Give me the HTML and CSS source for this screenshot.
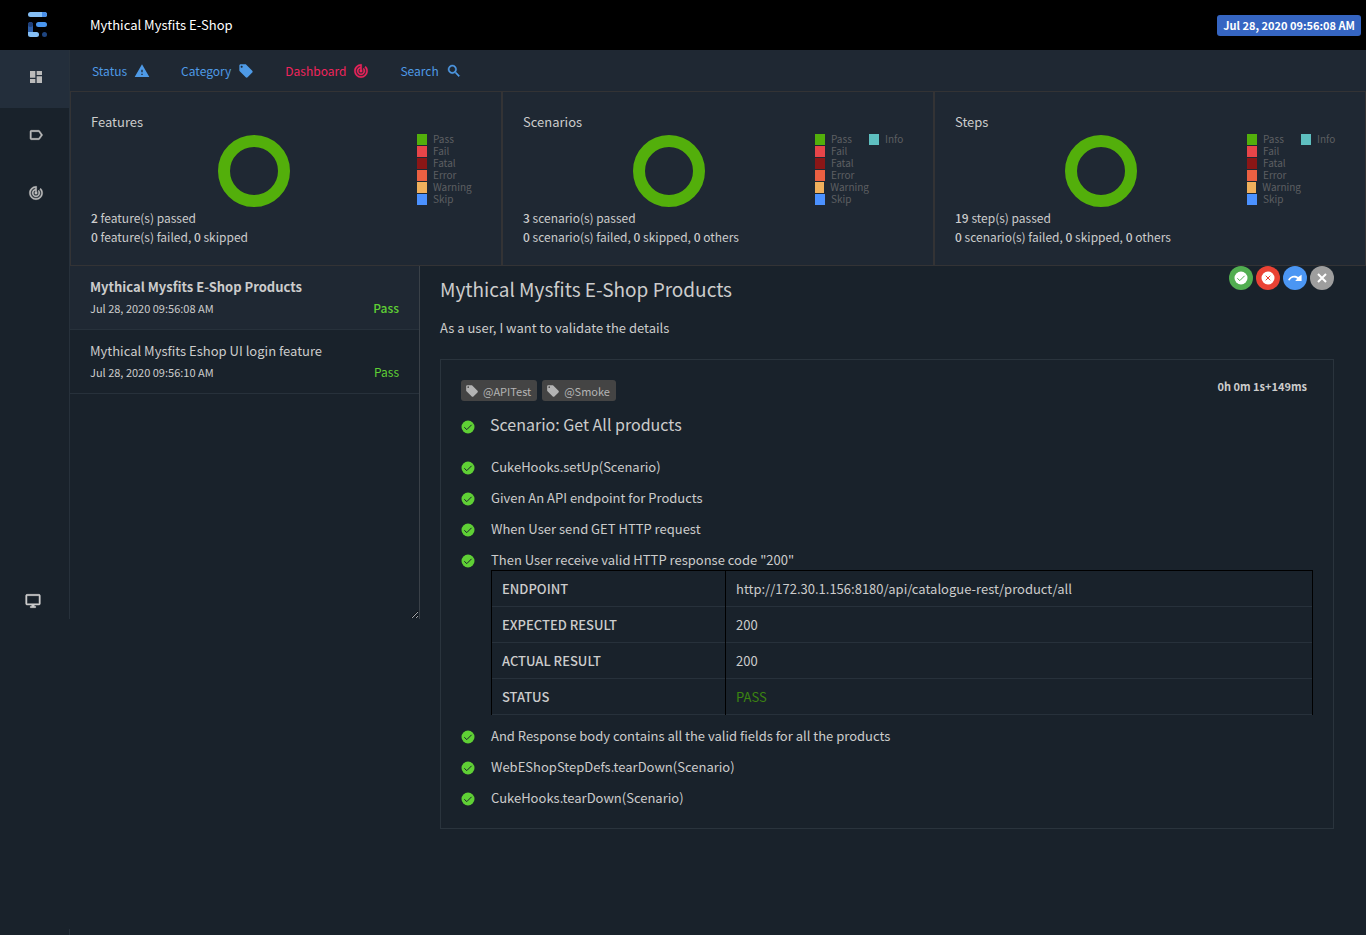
FILE: index.html
```html
<!DOCTYPE html>
<html lang="en">
<head>
<meta charset="utf-8">
<title>Mythical Mysfits E-Shop</title>
<link rel="stylesheet" href="styles.css">
</head>
<body>
<svg class="defs" aria-hidden="true">
  <symbol id="dash" viewBox="0 0 24 24"><path d="M3 13h8V3H3v10zm0 8h8v-6H3v6zm10 0h8V11h-8v10zm0-18v6h8V3h-8z"/></symbol>
  <symbol id="label" viewBox="0 0 24 24"><path d="M17.63 5.84C17.27 5.33 16.67 5 16 5L5 5.01C3.9 5.01 3 5.9 3 7v10c0 1.1.9 1.99 2 1.99L16 19c.67 0 1.27-.33 1.63-.84L22 12l-4.37-6.16zM16 17H5V7h11l3.55 5L16 17z" stroke="currentColor" stroke-width=".7"/></symbol>
  <symbol id="track" viewBox="0 0 24 24"><path d="M19.07 4.93l-1.41 1.41C19.1 7.79 20 9.79 20 12c0 4.42-3.58 8-8 8s-8-3.58-8-8c0-4.08 3.05-7.44 7-7.93v2.02C8.16 6.57 6 9.03 6 12c0 3.31 2.69 6 6 6s6-2.69 6-6c0-1.66-.67-3.16-1.76-4.24l-1.41 1.41C15.55 9.9 16 10.9 16 12c0 2.21-1.79 4-4 4s-4-1.79-4-4c0-1.86 1.28-3.41 3-3.86v2.14c-.6.35-1 .98-1 1.72 0 1.1.9 2 2 2s2-.9 2-2c0-.74-.4-1.38-1-1.72V2h-1C6.48 2 2 6.48 2 12s4.48 10 10 10 10-4.48 10-10c0-2.76-1.12-5.26-2.93-7.07z" stroke="currentColor" stroke-width=".6"/></symbol>
  <symbol id="desktop" viewBox="0 0 24 24"><path d="M21 2H3c-1.1 0-2 .9-2 2v12c0 1.1.9 2 2 2h7v2H8v2h8v-2h-2v-2h7c1.1 0 2-.9 2-2V4c0-1.1-.9-2-2-2zm0 14H3V4h18v12z" stroke="currentColor" stroke-width=".7"/></symbol>
  <symbol id="warn" viewBox="0 0 24 24"><path d="M1 21h22L12 2 1 21zm12-3h-2v-2h2v2zm0-4h-2v-4h2v4z"/></symbol>
  <symbol id="tag" viewBox="0 0 24 24"><path d="M21.41 11.58l-9-9C12.05 2.22 11.55 2 11 2H4c-1.1 0-2 .9-2 2v7c0 .55.22 1.05.59 1.42l9 9c.36.36.86.58 1.41.58.55 0 1.05-.22 1.41-.59l7-7c.37-.36.59-.86.59-1.41 0-.55-.23-1.06-.59-1.42zM5.5 7C4.67 7 4 6.33 4 5.5S4.67 4 5.5 4 7 4.67 7 5.5 6.33 7 5.5 7z"/></symbol>
  <symbol id="search" viewBox="0 0 24 24"><path d="M15.5 14h-.79l-.28-.27C15.41 12.59 16 11.11 16 9.5 16 5.91 13.09 3 9.5 3S3 5.91 3 9.5 5.91 16 9.5 16c1.61 0 3.09-.59 4.23-1.57l.27.28v.79l5 4.99L20.49 19l-4.99-5zm-6 0C7.01 14 5 11.99 5 9.5S7.01 5 9.5 5 14 7.01 14 9.5 11.99 14 9.5 14z" stroke="currentColor" stroke-width=".6"/></symbol>
  <symbol id="check" viewBox="0 0 14 14"><circle cx="7" cy="7" r="6.5"/><path class="mark" d="M3.3 7.3 5.8 9.6 10.6 4.8"/></symbol>
  <symbol id="cross" viewBox="0 0 14 14"><circle cx="7" cy="7" r="6.5"/><path class="mark" d="M4.7 4.7l4.6 4.6M9.3 4.7 4.7 9.3"/></symbol>
  <symbol id="skip" viewBox="0 0 14 14"><path d="M0 9C1.6 5.2 6.5 3.2 10.2 6.1L13.6 3.8V10H7.2L9.2 7.7C6 5.4 3.2 6.4 1.6 9.6Z"/></symbol>
  <symbol id="close" viewBox="0 0 14 14"><path d="M3 3l8 8M11 3l-8 8" fill="none" stroke="currentColor" stroke-width="2"/></symbol>
</svg>

<header class="top">
  <a class="logo" href="#" aria-label="Home">
    <svg width="20" height="26" viewBox="0 0 20 26">
      <rect x="0" y="0" width="19" height="5" rx="2.5" fill="#85bff5"/><path d="M14 0h2.5a2.5 2.5 0 0 1 0 5H14z" fill="#4a8fe8"/>
      <rect x="8" y="10" width="11" height="5" rx="2.5" fill="#4a96ee"/>
      <rect x="0" y="10" width="5" height="14" rx="2.5" fill="#2b5ca6"/><rect x="0" y="10" width="5" height="5" rx="2.5" fill="#1f3f78"/>
      <path d="M0 20h8.5a2.5 2.5 0 0 1 0 5H2.5A2.5 2.5 0 0 1 0 22.5z" fill="#85bff5"/>
      <circle cx="16.5" cy="22.5" r="2.5" fill="#1f4580"/>
    </svg>
  </a>
  <span class="brand">Mythical Mysfits E-Shop</span>
  <span class="stamp">Jul 28, 2020 09:56:08 AM</span>
</header>

<div class="shell">
  <aside class="side">
    <a class="side-link current" href="#" aria-label="Features"><svg class="i16"><use href="#dash"/></svg></a>
    <a class="side-link" href="#" aria-label="Categories"><svg class="i16"><use href="#label"/></svg></a>
    <a class="side-link" href="#" aria-label="Dashboard"><svg class="i16"><use href="#track"/></svg></a>
    <button class="theme" aria-label="Theme"><svg class="i16"><use href="#desktop"/></svg></button>
  </aside>

  <div class="page">
    <nav class="bar">
      <a href="#">Status<svg class="i16"><use href="#warn"/></svg></a>
      <a href="#">Category<svg class="i16"><use href="#tag"/></svg></a>
      <a class="on" href="#">Dashboard<svg class="i16"><use href="#track"/></svg></a>
      <a href="#">Search<svg class="i16"><use href="#search"/></svg></a>
    </nav>

    <section class="cards">
      <article class="card">
        <h2>Features</h2>
        <div class="chart">
          <div class="plot"><svg width="72" height="72"><circle cx="36" cy="36" r="30" class="ring"/></svg></div>
          <ul class="legend">
            <li><i class="pass"></i>Pass</li><li><i class="fail"></i>Fail</li><li><i class="fatal"></i>Fatal</li><li><i class="error"></i>Error</li><li><i class="warning"></i>Warning</li><li><i class="skipped"></i>Skip</li>
          </ul>
        </div>
        <p><b>2</b> feature(s) passed</p>
        <p><b>0</b> feature(s) failed, <b>0</b> skipped</p>
      </article>
      <article class="card">
        <h2>Scenarios</h2>
        <div class="chart">
          <div class="plot"><svg width="72" height="72"><circle cx="36" cy="36" r="30" class="ring"/></svg></div>
          <ul class="legend wide">
            <li><i class="pass"></i>Pass</li><li><i class="fail"></i>Fail</li><li><i class="fatal"></i>Fatal</li><li><i class="error"></i>Error</li><li><i class="warning"></i>Warning</li><li><i class="skipped"></i>Skip</li><li><i class="info"></i>Info</li>
          </ul>
        </div>
        <p><b>3</b> scenario(s) passed</p>
        <p><b>0</b> scenario(s) failed, <b>0</b> skipped, <b>0</b> others</p>
      </article>
      <article class="card">
        <h2>Steps</h2>
        <div class="chart">
          <div class="plot"><svg width="72" height="72"><circle cx="36" cy="36" r="30" class="ring"/></svg></div>
          <ul class="legend wide">
            <li><i class="pass"></i>Pass</li><li><i class="fail"></i>Fail</li><li><i class="fatal"></i>Fatal</li><li><i class="error"></i>Error</li><li><i class="warning"></i>Warning</li><li><i class="skipped"></i>Skip</li><li><i class="info"></i>Info</li>
          </ul>
        </div>
        <p><b>19</b> step(s) passed</p>
        <p><b>0</b> scenario(s) failed, <b>0</b> skipped, <b>0</b> others</p>
      </article>
    </section>

    <main class="work">
      <ul class="tests">
        <li class="test active">
          <h3>Mythical Mysfits E-Shop Products</h3>
          <div class="meta"><span>Jul 28, 2020 09:56:08 AM</span><span class="ok">Pass</span></div>
        </li>
        <li class="test">
          <h3>Mythical Mysfits Eshop UI login feature</h3>
          <div class="meta"><span>Jul 28, 2020 09:56:10 AM</span><span class="ok">Pass</span></div>
        </li>
      </ul>

      <section class="detail">
        <div class="head">
          <h1>Mythical Mysfits E-Shop Products</h1>
          <div class="filters">
            <button class="round green" aria-label="Passed"><svg class="i14"><use href="#check"/></svg></button>
            <button class="round red" aria-label="Failed"><svg class="i14"><use href="#cross"/></svg></button>
            <button class="round blue" aria-label="Skipped"><svg class="i14"><use href="#skip"/></svg></button>
            <button class="round grey" aria-label="Clear filters"><svg class="i14"><use href="#close"/></svg></button>
          </div>
        </div>
        <p class="desc">As a user, I want to validate the details</p>

        <article class="scenario">
          <div class="tags">
            <span class="tag"><svg class="i14"><use href="#tag"/></svg>@APITest</span>
            <span class="tag"><svg class="i14"><use href="#tag"/></svg>@Smoke</span>
            <span class="time">0h 0m 1s+149ms</span>
          </div>
          <h2 class="title"><svg class="i14 st"><use href="#check"/></svg>Scenario: Get All products</h2>
          <ul class="steps">
            <li><svg class="i14 st"><use href="#check"/></svg><span>CukeHooks.setUp(Scenario)</span></li>
            <li><svg class="i14 st"><use href="#check"/></svg><span>Given An API endpoint for Products</span></li>
            <li><svg class="i14 st"><use href="#check"/></svg><span>When User send GET HTTP request</span></li>
            <li><svg class="i14 st"><use href="#check"/></svg>
              <div class="body"><span>Then User receive valid HTTP response code "200"</span>
                <table>
                  <tr><th scope="row">ENDPOINT</th><td>http://172.30.1.156:8180/api/catalogue-rest/product/all</td></tr>
                  <tr><th scope="row">EXPECTED RESULT</th><td>200</td></tr>
                  <tr><th scope="row">ACTUAL RESULT</th><td>200</td></tr>
                  <tr><th scope="row">STATUS</th><td class="good">PASS</td></tr>
                </table>
              </div></li>
            <li><svg class="i14 st"><use href="#check"/></svg><span>And Response body contains all the valid fields for all the products</span></li>
            <li><svg class="i14 st"><use href="#check"/></svg><span>WebEShopStepDefs.tearDown(Scenario)</span></li>
            <li><svg class="i14 st"><use href="#check"/></svg><span>CukeHooks.tearDown(Scenario)</span></li>
          </ul>
        </article>
      </section>
    </main>
  </div>
</div>
<footer class="foot"></footer>
</body>
</html>
```
FILE: styles.css
```css
* { box-sizing: border-box; }
body, h1, h2, h3, p, ul { margin: 0; padding: 0; }
ul { list-style: none; }
body {
  display: flex;
  flex-direction: column;
  min-height: 100vh;
  background: #19222b;
  color: #ccc;
  font: 13px/20px "Noto Sans CJK SC", "Source Sans Pro", sans-serif;
}
a { text-decoration: none; }
button { padding: 0; border: 0; background: none; cursor: pointer; }
svg { display: block; fill: currentColor; flex: none; }
.defs { display: none; }
.i14 { width: 14px; height: 14px; }
.i16 { width: 16px; height: 16px; }

.top { display: flex; align-items: center; height: 50px; padding-right: 5px; background: #000; color: #fff; }
.logo { width: 90px; padding-left: 28px; }
.stamp { margin-left: auto; padding: 0 6px; border-radius: 3px; background: #3565c2; font-size: 11px; line-height: 21px; font-weight: 700; }

.shell { display: flex; align-items: flex-start; }
.side { display: flex; flex-direction: column; flex: none; width: 70px; height: 569px; border-right: 1px solid #27313b; }
.side-link { display: flex; justify-content: center; height: 58px; padding: 19px 0 0 3px; color: #bbb; }
.side-link.current { background: #232e3b; }
.theme { width: 16px; margin: auto 0 10px 25px; color: #ccc; }
.page { flex: 1; min-width: 0; }
.foot { height: 6px; margin: auto 0 0 69px; border-left: 1px solid #27313b; }

.bar { display: flex; gap: 31px; height: 41px; padding-left: 22px; background: #1f2833; }
.bar a { display: flex; align-items: center; gap: 7px; color: #4e9ae6; font-size: 12px; }
.bar .on { color: #f0245c; }

.cards { display: flex; background: #1f2833; }
.card { flex: 1; height: 175px; padding: 20px; border: 1px solid #333335; }
.card h2 { font-size: 13px; line-height: 20px; font-weight: 400; }
.card p { font-size: 12px; line-height: 19px; }
.card b { font-weight: 500; }
.chart { display: flex; height: 72px; margin: 3px 0 1px; }
.plot { display: flex; justify-content: center; flex: 1; }
.ring { fill: none; stroke: #53af0b; stroke-width: 12; }
.legend { display: grid; grid-template-rows: repeat(6, 12px); grid-auto-flow: column; grid-template-columns: 64px; width: 64px; margin-top: -2px; color: #5d5f62; font-size: 10px; line-height: 12px; }
.legend.wide { grid-template-columns: 54px 44px; width: 98px; }
.legend li { display: flex; align-items: center; gap: 6px; }
.legend i { width: 10px; height: 11px; }
.pass { background: #53af0b; }
.fail { background: #e84549; }
.fatal { background: #8b1616; }
.error { background: #ea6042; }
.warning { background: #f0b05c; }
.skipped { background: #4b91ff; }
.info { background: #5ebfc0; }

.work { display: flex; align-items: flex-start; }
.tests { flex: none; width: 350px; height: 353px; overflow: auto; resize: both; border-right: 1px solid #3a4148; }
.test { height: 64px; padding: 10px 20px; border-bottom: 1px solid #27313b; }
.test.active { background: #1f2833; }
.test h3 { font-size: 13px; line-height: 22px; font-weight: 400; }
.test.active h3 { font-weight: 700; }
.meta { display: flex; justify-content: space-between; font-size: 11px; line-height: 20px; }
.ok { color: #5fd035; font-size: 12px; }
.active .ok { font-weight: 500; }

.detail { flex: 1; min-width: 0; padding: 0 32px 20px 20px; }
.head { display: flex; justify-content: space-between; align-items: flex-start; }
.head h1 { padding-top: 9px; font-size: 19px; line-height: 28px; font-weight: 400; }
.filters { display: flex; gap: 3px; }
.round { display: flex; align-items: center; justify-content: center; width: 24px; height: 24px; border-radius: 50%; color: #fff; }
.green { background: #51ae50; --mark: #51ae50; }
.red { background: #ea4234; --mark: #ea4234; }
.blue { background: #4b96f3; }
.grey { background: #9e9e9e; }
.mark { fill: none; stroke: var(--mark, #19222b); }
.desc { margin: 15px 0 21px; }

.scenario { padding: 20px 20px 9px; border: 1px solid #2a343d; }
.tags { display: flex; gap: 5px; }
.tag { display: flex; align-items: center; gap: 4px; height: 21px; padding: 0 6px 0 4px; border-radius: 3px; background: #444; color: #b4b4b4; font-size: 11px; }
.time { margin-left: auto; padding-right: 6px; font-size: 11px; line-height: 12px; font-weight: 700; }
.st { color: #5fd035; }
.title { display: flex; align-items: center; gap: 15px; margin: 10px 0 20px; font-size: 16px; line-height: 26px; font-weight: 400; }
.title .st { margin-top: 6px; }
.steps li { display: flex; gap: 16px; padding-bottom: 11px; }
.steps .st { margin-top: 4px; }
.body { flex: 1; }
table { width: 100%; border-collapse: collapse; border: 1px solid #000; border-bottom-color: #27313b; }
th, td { height: 36px; padding: 0 10px; border: solid #000; border-width: 0 1px; text-align: left; }
tr + tr th, tr + tr td { border-top: 1px solid #27313b; }
th { width: 234px; font-weight: 500; }
.good { color: #3c8411; }
```
